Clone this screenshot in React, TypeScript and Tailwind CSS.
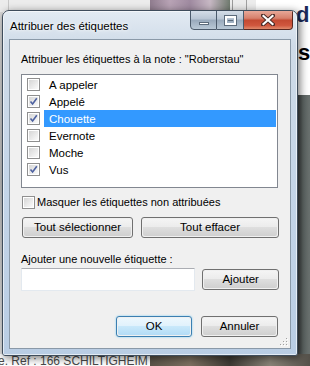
import React from "react";

const font = { fontFamily: '"Liberation Sans", Arial, sans-serif' };

function Check({ checked }: { checked: boolean }) {
  return (
    <div className="w-[13px] h-[13px] border border-[#8f8f8f] bg-white p-[1px] shrink-0">
      <div className="w-full h-full bg-gradient-to-br from-[#d6d6d6] to-[#fbfbfb] relative">
        {checked && (
          <svg viewBox="0 0 9 9" className="absolute inset-0 w-[9px] h-[9px]">
            <path d="M1.5 4.5 L3.6 7 L7.8 1.2" stroke="#4d61a0" strokeWidth="1.6" fill="none" />
          </svg>
        )}
      </div>
    </div>
  );
}

function Btn({ label, className = "", def = false }: { label: string; className?: string; def?: boolean }) {
  return (
    <div
      className={
        "h-[21px] rounded-[3px] border flex items-stretch p-[1px] " +
        (def ? "border-[#3c7fb1] shadow-[0_0_2px_#6cc8f5] " : "border-[#707070] ") +
        className
      }
    >
      <div
        className={
          "flex-1 rounded-[2px] flex items-center justify-center text-[11.5px] text-black " +
          (def
            ? "bg-[linear-gradient(to_bottom,#ecf7fd_0%,#e1f2fc_45%,#c8e8fa_50%,#b3dcf6_100%)]"
            : "bg-[linear-gradient(to_bottom,#f4f4f4_0%,#ececec_45%,#dedede_50%,#d0d0d0_100%)]")
        }
      >
        {label}
      </div>
    </div>
  );
}

export default function App() {
  const items = [
    { t: "A appeler", c: false },
    { t: "Appelé", c: true },
    { t: "Chouette", c: true, sel: true },
    { t: "Evernote", c: false },
    { t: "Moche", c: false },
    { t: "Vus", c: true },
  ];
  return (
    <div className="w-[310px] h-[366px] relative overflow-hidden bg-white" style={font}>
      {/* desktop background */}
      <div className="absolute left-0 top-0 w-[310px] h-[12px] bg-[#ececec]" />
      <div className="absolute left-[8px] top-0 w-[1px] h-[12px] bg-[#c8c8c8]" />
      <div className="absolute left-[150px] top-0 w-[80px] h-[12px] bg-[linear-gradient(90deg,#8f7c8e,#b8a3b5,#9f8aa0,#c7b8c4,#6f7a6e)]" />
      <div className="absolute left-[232px] top-0 w-[1px] h-[12px] bg-[#9a9a9a]" />
      <div className="absolute left-[246px] top-0 w-[1px] h-[12px] bg-[#a0a0a0]" />
      <div className="absolute left-[256px] top-0 w-[54px] h-[95px] bg-white" />
      <div className="absolute left-[296px] top-[4px] text-[22px] leading-none font-bold text-[#1b2a5a]">
        di
      </div>
      <div className="absolute left-[298px] top-[42px] text-[22px] leading-none font-bold text-black">
        s
      </div>
      <div className="absolute left-[296px] top-[95px] w-[14px] h-[262px] bg-[linear-gradient(90deg,#3a3d3d,#5d6563_50%,#6a716f)]" />
      <div className="absolute left-0 top-[354px] w-[310px] h-[12px] bg-white" />
      <div className="absolute left-[150px] top-[354px] w-[160px] h-[12px] bg-[linear-gradient(90deg,#5a5348,#7d7060,#3d3a34,#8a8478,#55514a)]" />
      <div className="absolute left-[-2px] top-[354px] text-[12px] text-[#4a4a4a] leading-[14px]">
        e. Ref : 166 SCHILTIGHEIM
      </div>
      <div className="absolute left-0 top-[12px] w-[3px] h-[342px] bg-[linear-gradient(180deg,#d8d8d8,#bcbcbc,#e0e0e0)]" />

      {/* window */}
      <div className="absolute left-[2px] top-[10px] w-[296px] h-[346px] rounded-t-[7px] rounded-b-[3px] border border-[#3f4d5c] shadow-[2px_2px_8px_rgba(0,0,0,0.55)] bg-[linear-gradient(180deg,#e3ebf3_0%,#cfdbe8_10%,#c4d5e8_50%,#b9cde4_100%)] flex flex-col overflow-hidden">
        <div className="absolute inset-0 rounded-t-[6px] border border-white/60 pointer-events-none" />
        <div className="absolute left-[40px] top-[30px] w-[60px] h-[300px] bg-white/10" />
        {/* title bar */}
        <div className="h-[28px] flex items-start relative shrink-0">
          <div className="pl-[7px] pt-[7px] text-[11.5px] leading-[16px] text-black [text-shadow:0_0_6px_#ffffff,0_0_3px_#ffffff]">
            Attribuer des étiquettes
          </div>
          <div className="absolute left-[187px] top-[-1px] flex h-[20px]">
            <div className="w-[27px] h-[20px] border border-[#4b5a6b] rounded-bl-[4px] bg-[linear-gradient(180deg,#d4dde7_0%,#b8c5d3_45%,#98a9bb_50%,#b9c8d6_100%)] flex items-center justify-center">
              <div className="w-[10px] h-[3px] bg-white border border-[#5c6b7b] mt-[6px]" />
            </div>
            <div className="w-[27px] h-[20px] border border-l-0 border-[#4b5a6b] bg-[linear-gradient(180deg,#d4dde7_0%,#b8c5d3_45%,#98a9bb_50%,#b9c8d6_100%)] flex items-center justify-center">
              <div className="w-[11px] h-[9px] border-[2px] border-white outline outline-1 outline-[#5c6b7b] flex items-center justify-center">
                <div className="w-[5px] h-[1px] bg-[#5c6b7b]" />
              </div>
            </div>
            <div className="w-[49px] h-[20px] border border-l-0 border-[#5a2820] rounded-br-[4px] bg-[linear-gradient(180deg,#e8a898_0%,#d7806c_40%,#c44a32_52%,#d0573e_80%,#e08a6c_100%)] flex items-center justify-center">
              <svg width="14" height="12" viewBox="0 0 14 12">
                <path d="M2 1.5 L12 10.5 M12 1.5 L2 10.5" stroke="#4a2a26" strokeWidth="4" strokeLinecap="square" />
                <path d="M2.5 2 L11.5 10 M11.5 2 L2.5 10" stroke="#ffffff" strokeWidth="2.2" strokeLinecap="square" />
              </svg>
            </div>
          </div>
        </div>

        {/* client */}
        <div className="mx-[6px] h-[310px] border border-[#8a99a8] bg-[#f0f0f0] flex flex-col px-[11px] text-[11px] text-black relative">
          <div className="mt-[11px] leading-[16px] whitespace-nowrap">Attribuer les étiquettes à la note : "Roberstau"</div>
          <div className="mt-[7px] h-[114px] border border-[#828790] bg-white pt-[1px] pl-[5px] pr-[1px] mr-[1px]">
            {items.map((it) => (
              <div key={it.t} className="h-[17px] flex items-center">
                <Check checked={it.c} />
                <div
                  className={
                    "ml-[4px] flex-1 h-[17px] flex items-center pl-[5px] leading-[16px] text-[11.5px] " +
                    (it.sel ? "bg-[#3399ff] text-white" : "")
                  }
                >
                  {it.t}
                </div>
              </div>
            ))}
          </div>
          <div className="mt-[7px] h-[14px] flex items-center pl-[1px]">
            <Check checked={false} />
            <div className="ml-[2px] leading-[16px] whitespace-nowrap">Masquer les étiquettes non attribuées</div>
          </div>
          <div className="mt-[8px] flex">
            <Btn label="Tout sélectionner" className="w-[112px] ml-[1px]" />
            <Btn label="Tout effacer" className="w-[139px] ml-[8px]" />
          </div>
          <div className="mt-[13px] leading-[16px]">Ajouter une nouvelle étiquette :</div>
          <div className="mt-[1px] flex items-start">
            <div className="w-[175px] h-[23px] bg-white border border-[#e3e9ef] border-t-[#abadb3]" />
            <Btn label="Ajouter" className="w-[77px] ml-[7px] mt-[1px]" />
          </div>
          <div className="mt-[25px] flex justify-end pr-[1px]">
            <Btn label="OK" def className="w-[76px]" />
            <Btn label="Annuler" className="w-[77px] ml-[9px]" />
          </div>
          <svg className="absolute right-[2px] bottom-[2px]" width="8" height="8" viewBox="0 0 8 8">
            {[
              [6, 0], [6, 3], [3, 3], [6, 6], [3, 6], [0, 6],
            ].map(([x, y], i) => (
              <g key={i}>
                <rect x={x + 1} y={y + 1} width="1" height="1" fill="#ffffff" />
                <rect x={x} y={y} width="1" height="1" fill="#a0a0a0" />
              </g>
            ))}
          </svg>
        </div>
      </div>
    </div>
  );
}
